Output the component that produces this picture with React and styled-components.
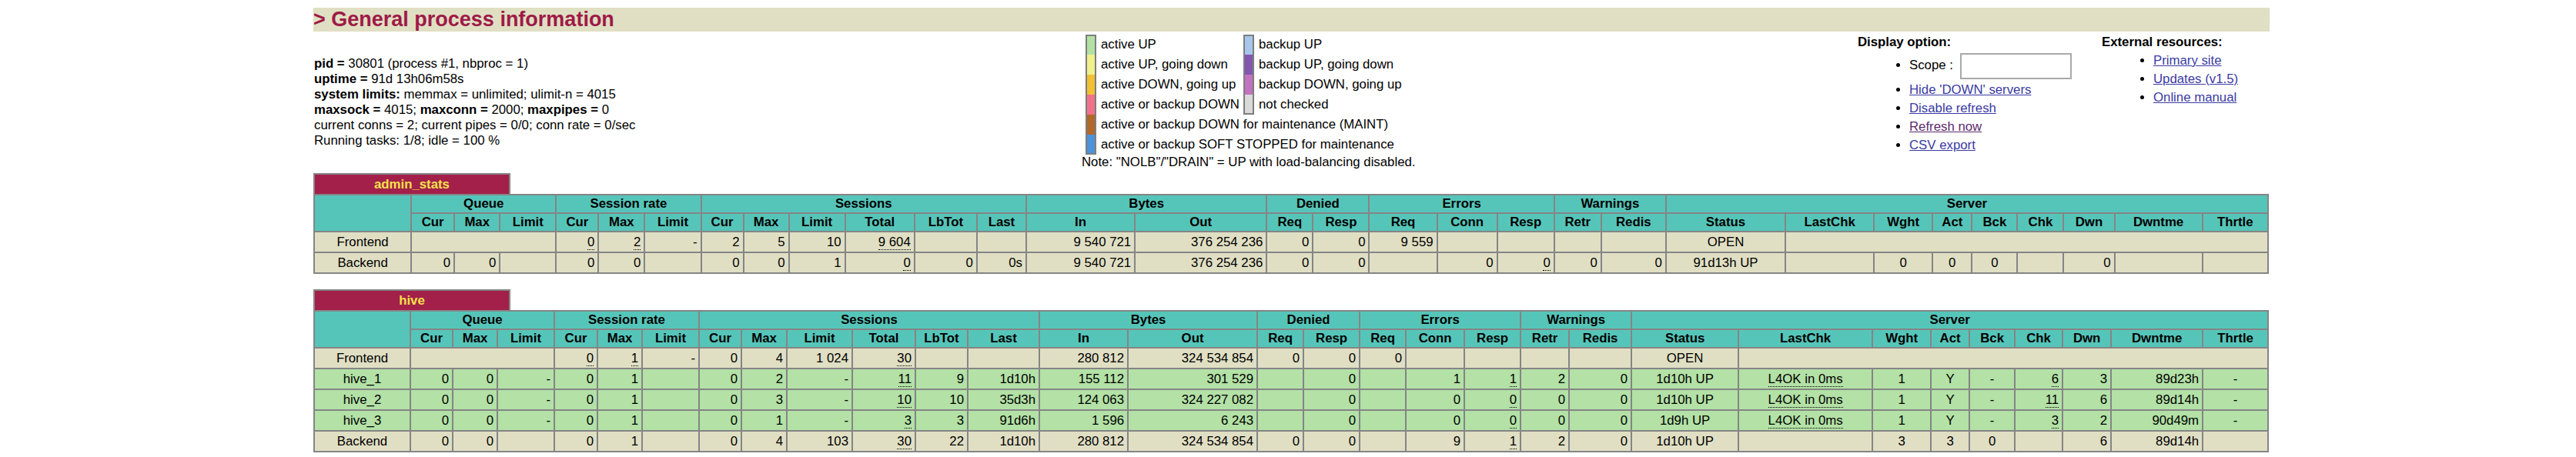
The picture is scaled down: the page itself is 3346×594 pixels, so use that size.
import React from 'react';
import styled, { createGlobalStyle } from 'styled-components';

const GlobalStyle = createGlobalStyle`
  body {
    margin: 0;
    background: #ffffff;
    color: #000000;
    font-family: "Liberation Sans", Arial, Helvetica, sans-serif;
    font-size: 16.8px;
  }
`;

const ADMIN_COLS = [126, 56, 59, 73, 55, 60, 73, 55, 59, 73, 90, 81, 64, 141, 171, 60, 73, 88, 78, 74, 61, 84, 155, 115, 76, 51, 59, 60, 66, 114, 85];
const HIVE_COLS = [125, 55, 58, 74, 56, 58, 74, 55, 59, 85, 82, 68, 93, 115, 168, 60, 73, 60, 76, 73, 63, 81, 139, 174, 76, 50, 59, 62, 63, 119, 85];
const CENTER_COLS = [0, 22, 23, 24, 25, 26, 30];

const GROUPS = [
    ['Queue', 3], ['Session rate', 3], ['Sessions', 6], ['Bytes', 2],
    ['Denied', 2], ['Errors', 3], ['Warnings', 2], ['Server', 9],
];
const SUBHEADS = ['Cur', 'Max', 'Limit', 'Cur', 'Max', 'Limit', 'Cur', 'Max', 'Limit', 'Total', 'LbTot', 'Last',
    'In', 'Out', 'Req', 'Resp', 'Req', 'Conn', 'Resp', 'Retr', 'Redis',
    'Status', 'LastChk', 'Wght', 'Act', 'Bck', 'Chk', 'Dwn', 'Dwntme', 'Thrtle'];

const u = v => ({ v, u: true });
const span = n => ({ v: '', span: n });

const PROXIES = [
    {
        name: 'admin_stats',
        cols: ADMIN_COLS,
        rows: [
            ['fe', ['Frontend', span(3), u('0'), u('2'), '-', '2', '5', '10', u('9 604'), '', '',
                '9 540 721', '376 254 236', '0', '0', '9 559', '', '', '', '', 'OPEN', span(8)]],
            ['fe', ['Backend', '0', '0', '', '0', '0', '', '0', '0', '1', u('0'), '0', '0s',
                '9 540 721', '376 254 236', '0', '0', '', '0', u('0'), '0', '0',
                '91d13h UP', '', '0', '0', '0', '', '0', '', '']],
        ],
    },
    {
        name: 'hive',
        cols: HIVE_COLS,
        rows: [
            ['fe', ['Frontend', span(3), u('0'), u('1'), '-', '0', '4', '1 024', u('30'), '', '',
                '280 812', '324 534 854', '0', '0', '0', '', '', '', '', 'OPEN', span(8)]],
            ['up', ['hive_1', '0', '0', '-', '0', '1', '', '0', '2', '-', u('11'), '9', '1d10h',
                '155 112', '301 529', '', '0', '', '1', u('1'), '2', '0',
                '1d10h UP', u('L4OK in 0ms'), '1', 'Y', '-', u('6'), '3', '89d23h', '-']],
            ['up', ['hive_2', '0', '0', '-', '0', '1', '', '0', '3', '-', u('10'), '10', '35d3h',
                '124 063', '324 227 082', '', '0', '', '0', u('0'), '0', '0',
                '1d10h UP', u('L4OK in 0ms'), '1', 'Y', '-', u('11'), '6', '89d14h', '-']],
            ['up', ['hive_3', '0', '0', '-', '0', '1', '', '0', '1', '-', u('3'), '3', '91d6h',
                '1 596', '6 243', '', '0', '', '0', u('0'), '0', '0',
                '1d9h UP', u('L4OK in 0ms'), '1', 'Y', '-', u('3'), '2', '90d49m', '-']],
            ['fe', ['Backend', '0', '0', '', '0', '1', '', '0', '4', '103', u('30'), '22', '1d10h',
                '280 812', '324 534 854', '0', '0', '', '9', u('1'), '2', '0',
                '1d10h UP', '', '3', '3', '0', '', '6', '89d14h', '']],
        ],
    },
];

const LEGEND_LEFT = [
    ['#b3e1a4', 'active UP'],
    ['#f0f08c', 'active UP, going down'],
    ['#f1c034', 'active DOWN, going up'],
    ['#f0718a', 'active or backup DOWN'],
    ['#b0692b', 'active or backup DOWN for maintenance (MAINT)'],
    ['#4d93da', 'active or backup SOFT STOPPED for maintenance'],
];
const LEGEND_RIGHT = [
    ['#a7c6ea', 'backup UP'],
    ['#8157b0', 'backup UP, going down'],
    ['#c172c0', 'backup DOWN, going up'],
    ['#d9d9d9', 'not checked'],
];

const renderCells = cells => {
    let col = 0;
    return cells.map((c, i) => {
        const cell = typeof c === 'string' ? { v: c } : c;
        const width = cell.span || 1;
        const center = CENTER_COLS.includes(col);
        col += width;
        return (
            <Td key={i} colSpan={width} $center={center}>
                {cell.u ? <U>{cell.v}</U> : cell.v}
            </Td>
        );
    });
};

const ProxyTable = ({ proxy, first }) => (
    <ProxyBlock $first={first}>
        <NameTag>{proxy.name}</NameTag>
        <StatsTable>
            <colgroup>
                {proxy.cols.map((w, i) => <col key={i} style={{ width: w }} />)}
            </colgroup>
            <thead>
                <HeadRow>
                    <Th rowSpan={2}></Th>
                    {GROUPS.map(([label, n]) => <Th key={label} colSpan={n}>{label}</Th>)}
                </HeadRow>
                <HeadRow>
                    {SUBHEADS.map((label, i) => <Th key={i}>{label}</Th>)}
                </HeadRow>
            </thead>
            <tbody>
                {proxy.rows.map(([kind, cells], i) => (
                    <DataRow key={i} $kind={kind}>{renderCells(cells)}</DataRow>
                ))}
            </tbody>
        </StatsTable>
    </ProxyBlock>
);

const App = () => {
    return (
        <Page>
            <GlobalStyle />
            <Title>&gt; General process information</Title>
            <TopRow>
                <Info>
                    <div><b>pid = </b>30801 (process #1, nbproc = 1)</div>
                    <div><b>uptime = </b>91d 13h06m58s</div>
                    <div><b>system limits:</b> memmax = unlimited; ulimit-n = 4015</div>
                    <div><b>maxsock = </b>4015; <b>maxconn = </b>2000; <b>maxpipes = </b>0</div>
                    <div>current conns = 2; current pipes = 0/0; conn rate = 0/sec</div>
                    <div>Running tasks: 1/8; idle = 100 %</div>
                </Info>
                <LegendBox>
                    <Legend>
                        {LEGEND_LEFT.map(([color, label], i) => (
                            <React.Fragment key={label}>
                                <Swatch $color={color} $first={i === 0} $last={i === LEGEND_LEFT.length - 1} />
                                <LegendLabel $span={i < LEGEND_RIGHT.length ? 1 : 3}>{label}</LegendLabel>
                                {i < LEGEND_RIGHT.length && (
                                    <>
                                        <Swatch
                                            $color={LEGEND_RIGHT[i][0]}
                                            $first={i === 0}
                                            $last={i === LEGEND_RIGHT.length - 1}
                                        />
                                        <LegendLabel>{LEGEND_RIGHT[i][1]}</LegendLabel>
                                    </>
                                )}
                            </React.Fragment>
                        ))}
                    </Legend>
                    <Note>Note: "NOLB"/"DRAIN" = UP with load-balancing disabled.</Note>
                </LegendBox>
                <Options>
                    <b>Display option:</b>
                    <OptionList>
                        <li>Scope : <ScopeInput type="text" /></li>
                        <li><Link href="#">Hide 'DOWN' servers</Link></li>
                        <li><Link href="#">Disable refresh</Link></li>
                        <li><Link href="#" $visited>Refresh now</Link></li>
                        <li><Link href="#">CSV export</Link></li>
                    </OptionList>
                </Options>
                <Options>
                    <b>External resources:</b>
                    <OptionList>
                        <li><Link href="#">Primary site</Link></li>
                        <li><Link href="#">Updates (v1.5)</Link></li>
                        <li><Link href="#">Online manual</Link></li>
                    </OptionList>
                </Options>
            </TopRow>
            {PROXIES.map((p, i) => <ProxyTable key={p.name} proxy={p} first={i === 0} />)}
        </Page>
    );
};

const Page = styled.div`
    width: 2541px;
    margin-left: 407px;
    padding-top: 10px;
`;

const Title = styled.h3`
    margin: 0;
    height: 31px;
    line-height: 31px;
    background: #e0dfc3;
    color: #9e1a47;
    font-size: 27px;
    font-weight: bold;
`;

const TopRow = styled.div`
    display: grid;
    grid-template-columns: 998px 1008px 317px 1fr;
    align-items: center;
    padding: 4px 0 3px;
`;

const Info = styled.div`
    line-height: 20px;
    padding-left: 1px;
`;

const LegendBox = styled.div`
    display: flex;
    flex-direction: column;
`;

const Legend = styled.div`
    display: grid;
    grid-template-columns: 14px auto 14px 1fr;
    grid-auto-rows: 26px;
    align-items: center;
    margin-left: 5px;
    justify-content: start;
`;

const Swatch = styled.div`
    align-self: stretch;
    box-sizing: border-box;
    background: ${p => p.$color};
    border-left: 2px solid #7d7d7d;
    border-right: 2px solid #7d7d7d;
    border-top: ${p => (p.$first ? '2px solid #7d7d7d' : 'none')};
    border-bottom: ${p => (p.$last ? '2px solid #7d7d7d' : 'none')};
`;

const LegendLabel = styled.div`
    grid-column: span ${p => p.$span || 1};
    padding: 0 5px 0 6px;
    white-space: nowrap;
`;

const Note = styled.div`
    line-height: 20px;
`;

const Options = styled.div`
    align-self: start;
    white-space: nowrap;
    line-height: 20px;

    b {
        font-weight: bold;
    }
`;

const OptionList = styled.ul`
    margin: 4px 0 0;
    padding-left: 67px;

    li {
        margin-top: 4px;
    }
`;

const ScopeInput = styled.input`
    box-sizing: border-box;
    width: 145px;
    height: 34px;
    margin-left: 4px;
    border: 2px solid #a9a9a9;
    vertical-align: middle;
`;

const Link = styled.a`
    color: ${p => (p.$visited ? '#5c2a6c' : '#3a3aa3')};
    text-decoration: underline;
`;

const ProxyBlock = styled.div`
    margin-top: ${p => (p.$first ? '1px' : '20px')};
`;

const NameTag = styled.div`
    box-sizing: border-box;
    width: 256px;
    height: 27px;
    line-height: 25px;
    background: #a3204a;
    color: #f5e24b;
    font-weight: bold;
    text-align: center;
    border: 2px solid #858585;
    border-bottom: none;
`;

const StatsTable = styled.table`
    border-collapse: collapse;
    table-layout: fixed;
    width: 2540px;
`;

const HeadRow = styled.tr`
    height: 24px;
`;

const Th = styled.th`
    background: #56c5b9;
    border: 2px solid #858585;
    padding: 0 3px;
    font-weight: bold;
    text-align: center;
    white-space: nowrap;
    overflow: hidden;
`;

const DataRow = styled.tr`
    height: 27px;
    background: ${p => (p.$kind === 'up' ? '#b3e1a6' : '#e0dfc4')};
`;

const Td = styled.td`
    border: 2px solid #858585;
    padding: 0 4px;
    text-align: ${p => (p.$center ? 'center' : 'right')};
    white-space: nowrap;
    overflow: hidden;
`;

const U = styled.span`
    border-bottom: 1px dotted #000000;
`;

export default App;
